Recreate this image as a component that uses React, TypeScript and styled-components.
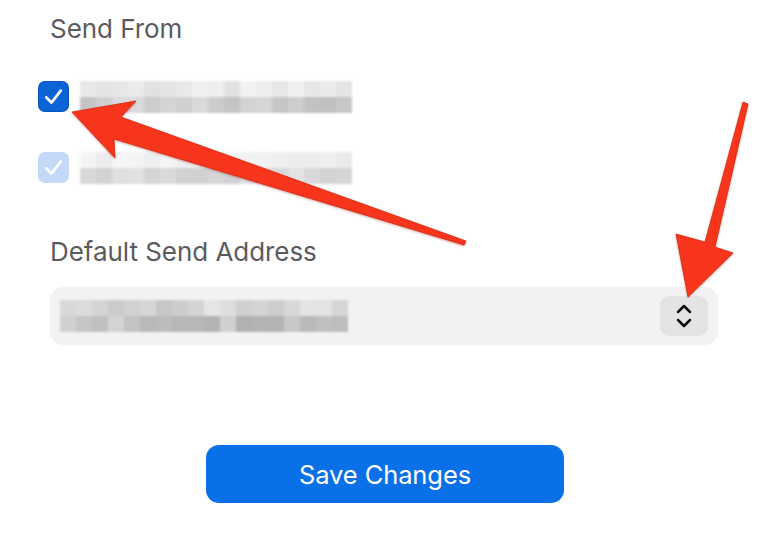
import React from 'react';
import styled, { createGlobalStyle } from 'styled-components';

const GlobalStyle = createGlobalStyle`
  html, body {
    margin: 0;
    padding: 0;
    background: #ffffff;
  }
  body {
    font-family: Inter, "Liberation Sans", Arial, sans-serif;
    -webkit-font-smoothing: antialiased;
  }
`;

const Page = styled.div`
  position: relative;
  width: 770px;
  height: 535px;
  overflow: hidden;
  box-sizing: border-box;
  padding: 14px 52px 0 38px;
  display: flex;
  flex-direction: column;
`;

const SectionLabel = styled.div<{ $top?: number }>`
  margin: ${({ $top }) => $top ?? 0}px 0 0 12px;
  font-size: 26px;
  line-height: 30px;
  color: #5b5b5e;
  letter-spacing: -0.05px;
`;

const CheckList = styled.div`
  display: flex;
  flex-direction: column;
  gap: 40px;
  margin-top: 37px;
`;

const CheckRow = styled.div`
  display: flex;
  align-items: center;
  gap: 11px;
  height: 31px;
`;

const CheckBox = styled.div<{ $muted?: boolean }>`
  width: 31px;
  height: 31px;
  border-radius: 7px;
  flex-shrink: 0;
  display: flex;
  align-items: center;
  justify-content: center;
  background: ${({ $muted }) => ($muted ? '#c3d9f7' : '#0b63d6')};
  box-shadow: ${({ $muted }) =>
    $muted ? 'none' : 'inset 0 0 0 1px rgba(0, 40, 120, 0.25)'};
`;

const Mosaic = styled.div<{ $width: number }>`
  width: ${({ $width }) => $width}px;
  display: grid;
  grid-template-columns: repeat(auto-fill, 16px);
  grid-auto-rows: 16px;
  filter: blur(1.2px);
`;

const Cell = styled.div`
  width: 16px;
  height: 16px;
`;

const Select = styled.div`
  margin: 20px 0 0 12px;
  height: 58px;
  border-radius: 14px;
  background: #f2f2f4;
  display: flex;
  align-items: center;
  justify-content: space-between;
  padding: 0 10px;
`;

const Stepper = styled.div`
  width: 48px;
  height: 40px;
  border-radius: 9px;
  background: #e4e4e7;
  display: flex;
  align-items: center;
  justify-content: center;
`;

const Footer = styled.div`
  display: flex;
  justify-content: center;
  margin-top: 100px;
  padding-left: 14px;
`;

const SaveButton = styled.button`
  width: 358px;
  height: 58px;
  border: none;
  border-radius: 13px;
  background: #0a70e8;
  color: #ffffff;
  font-family: inherit;
  font-size: 25.5px;
  letter-spacing: -0.1px;
  padding: 0;
  cursor: pointer;
`;

const Overlay = styled.svg`
  position: absolute;
  left: 0;
  top: 0;
  pointer-events: none;
`;

// deterministic grey values for the blurred placeholder strips
const shade = (seed: number, base: number, spread: number) => {
  const x = Math.sin(seed * 12.9898) * 43758.5453;
  const r = x - Math.floor(x);
  const v = Math.round(base + (r - 0.5) * spread);
  return `rgb(${v}, ${v}, ${v + 2})`;
};

const Redacted: React.FC<{ width: number; seed: number; rows?: [number, number][] }> = ({
  width,
  seed,
  rows = [
    [232, 20],
    [205, 30],
  ],
}) => {
  const cols = Math.floor(width / 16);
  return (
    <Mosaic $width={width}>
      {rows.flatMap(([base, spread], r) =>
        Array.from({ length: cols }, (_, c) => (
          <Cell key={`${r}-${c}`} style={{ background: shade(seed + r * 31 + c, base, spread) }} />
        ))
      )}
    </Mosaic>
  );
};

const Check = () => (
  <svg width="31" height="31" viewBox="0 0 31 31">
    <path d="M8.2 16.2 L13.4 21.6 L22.8 9.6" fill="none" stroke="#fff" strokeWidth="2.7" strokeLinecap="round" strokeLinejoin="round" />
  </svg>
);

const Chevrons = () => (
  <svg width="20" height="30" viewBox="0 0 20 30">
    <path d="M4 11 L10 5 L16 11" fill="none" stroke="#111113" strokeWidth="2.5" strokeLinecap="round" strokeLinejoin="round" />
    <path d="M4 19 L10 25 L16 19" fill="none" stroke="#111113" strokeWidth="2.5" strokeLinecap="round" strokeLinejoin="round" />
  </svg>
);

const Arrows = () => (
  <Overlay width="770" height="535" viewBox="0 0 770 535">
    <defs>
      <filter id="arrowShadow" x="-10%" y="-10%" width="120%" height="120%">
        <feDropShadow dx="0" dy="1" stdDeviation="1.2" floodColor="#7a1000" floodOpacity="0.35" />
      </filter>
    </defs>
    <g fill="#f7341a" stroke="#d9260c" strokeWidth="0.8" strokeLinejoin="round" filter="url(#arrowShadow)">
      <polygon points="72,112 136,101 121,117 466,241 464,245 114,139 115,158" />
      <polygon points="688,297 676,234 705,242 743,102 748,104 715,247 733,253" />
    </g>
  </Overlay>
);

export default function App() {
  return (
    <>
      <GlobalStyle />
      <Page>
        <SectionLabel>Send From</SectionLabel>
        <CheckList>
          <CheckRow>
            <CheckBox>
              <Check />
            </CheckBox>
            <Redacted width={272} seed={3} />
          </CheckRow>
          <CheckRow>
            <CheckBox $muted>
              <Check />
            </CheckBox>
            <Redacted
              width={272}
              seed={11}
              rows={[
                [240, 12],
                [218, 24],
              ]}
            />
          </CheckRow>
        </CheckList>
        <SectionLabel $top={54}>Default Send Address</SectionLabel>
        <Select>
          <Redacted width={288} seed={21} rows={[[214, 30], [196, 40]]} />
          <Stepper>
            <Chevrons />
          </Stepper>
        </Select>
        <Footer>
          <SaveButton>Save Changes</SaveButton>
        </Footer>
        <Arrows />
      </Page>
    </>
  );
}
